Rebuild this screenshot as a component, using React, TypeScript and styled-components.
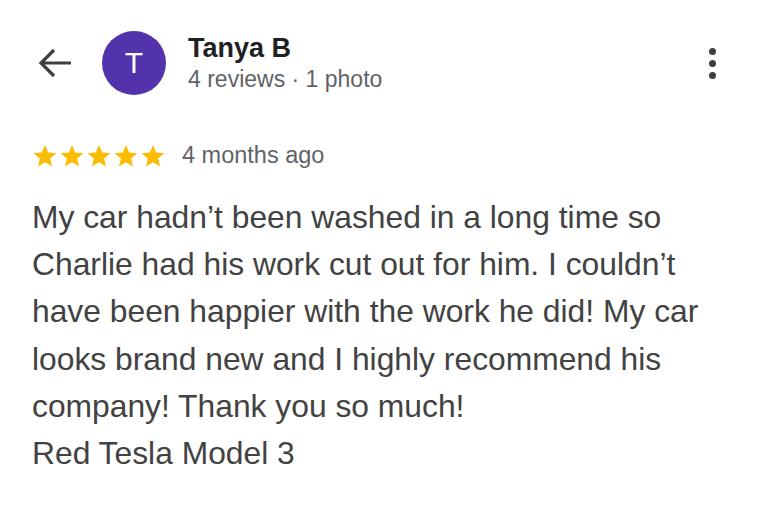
import React from "react";
import styled, { createGlobalStyle } from "styled-components";

const Global = createGlobalStyle`
  html, body { margin: 0; padding: 0; background: #ffffff; }
  body { font-family: "Liberation Sans", Arial, sans-serif; }
`;

const Page = styled.div`
  width: 768px;
  height: 508px;
  box-sizing: border-box;
  padding: 29px 32px 0 32px;
  background: #fff;
`;

const Header = styled.div`
  display: flex;
  align-items: center;
  height: 68px;
`;

const BackButton = styled.div`
  width: 48px;
  display: flex;
  align-items: center;
  margin-left: 5px;
  color: #3c4043;
`;

const Avatar = styled.div`
  width: 64px;
  height: 64px;
  border-radius: 50%;
  background: #5233ab;
  color: #ffffff;
  display: flex;
  align-items: center;
  justify-content: center;
  font-size: 30px;
  margin-left: 17px;
`;

const Info = styled.div`
  display: flex;
  flex-direction: column;
  margin-left: 22px;
  flex: 1;
`;

const Name = styled.div`
  font-size: 27px;
  font-weight: bold;
  color: #202124;
  line-height: 31px;
`;

const Sub = styled.div`
  font-size: 23px;
  color: #5f6368;
  line-height: 30px;
`;

const More = styled.div`
  display: flex;
  flex-direction: column;
  gap: 5px;
  margin-right: 20px;
`;

const Dot = styled.span`
  width: 7px;
  height: 7px;
  border-radius: 50%;
  background: #3c4043;
`;

const RatingRow = styled.div`
  display: flex;
  align-items: center;
  margin-top: 45px;
  gap: 16px;
`;

const Stars = styled.div`
  display: flex;
  gap: 1px;
`;

const Ago = styled.div`
  font-size: 23.5px;
  color: #5f6368;
`;

const Body = styled.div`
  margin-top: 25px;
  font-size: 31.8px;
  line-height: 47.2px;
  color: #424242;
`;

const Star = () => (
  <svg width="26" height="26" viewBox="0 0 24 24">
    <path
      fill="#fbbc04"
      d="M12 1.8l2.95 6.98 7.55.64-5.73 4.96 1.72 7.38L12 17.83l-6.49 3.93 1.72-7.38L1.5 9.42l7.55-.64z"
    />
  </svg>
);

export default function App() {
  return (
    <Page>
      <Global />
      <Header>
        <BackButton>
          <svg width="36" height="32" viewBox="0 0 36 32">
            <path d="M34 16H4M17 3L4 16l13 13" fill="none" stroke="#3c4043" strokeWidth="3.2" />
          </svg>
        </BackButton>
        <Avatar>T</Avatar>
        <Info>
          <Name>Tanya B</Name>
          <Sub>4 reviews · 1 photo</Sub>
        </Info>
        <More>
          <Dot />
          <Dot />
          <Dot />
        </More>
      </Header>
      <RatingRow>
        <Stars>
          {[0, 1, 2, 3, 4].map((i) => (
            <Star key={i} />
          ))}
        </Stars>
        <Ago>4 months ago</Ago>
      </RatingRow>
      <Body>
        My car hadn’t been washed in a long time so
        <br />
        Charlie had his work cut out for him. I couldn’t
        <br />
        have been happier with the work he did! My car
        <br />
        looks brand new and I highly recommend his
        <br />
        company! Thank you so much!
        <br />
        Red Tesla Model 3
      </Body>
    </Page>
  );
}
